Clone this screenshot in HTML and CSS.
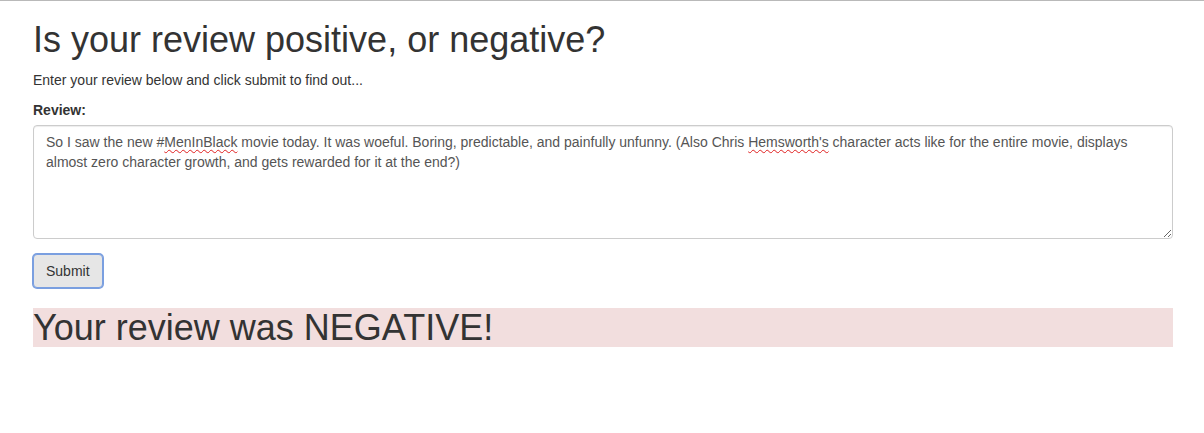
FILE: index.html
```html
<!DOCTYPE html>
<html lang="en">
<head>
<meta charset="utf-8">
<title>Review sentiment</title>
<link rel="stylesheet" href="styles.css">
</head>
<body>
<div class="topline"></div>
<div class="container">
  <h1 class="title">Is your review positive, or negative?</h1>
  <p class="lead-text">Enter your review below and click submit to find out...</p>
  <form class="review-form">
    <div class="form-group">
      <label class="field-label">Review:</label>
      <div class="form-control review-box" role="textbox" aria-multiline="true">So I saw the new #<span class="misspelled">MenInBlack</span> movie today. It was woeful. Boring, predictable, and painfully unfunny. (Also Chris <span class="misspelled">Hemsworth's</span> character acts like for the entire movie, displays almost zero character growth, and gets rewarded for it at the end?)</div>
    </div>
    <button type="button" class="btn btn-focused">Submit</button>
  </form>
  <h1 class="result result-negative">Your review was NEGATIVE!</h1>
</div>
</body>
</html>
```
FILE: styles.css
```css
html, body {
  margin: 0;
  padding: 0;
}
body {
  font-family: "Liberation Sans", Arial, Helvetica, sans-serif;
  font-size: 14px;
  line-height: 1.42857143;
  color: #333;
  background: #fff;
}
.topline {
  height: 1px;
  background: #b9b9b9;
}
.container {
  width: 1140px;
  margin: 0 auto;
  padding: 0 14px 0 16px;
}
.title, .result {
  font-size: 36px;
  font-weight: 500;
  line-height: 1.1;
  color: #333;
}
.title {
  margin: 19px 0 10px;
}
.lead-text {
  margin: 0 0 10px;
}
.form-group {
  margin-bottom: 15px;
}
.field-label {
  display: inline-block;
  margin-bottom: 5px;
  font-weight: bold;
}
.form-control {
  display: block;
  box-sizing: border-box;
  width: 100%;
  height: 114px;
  padding: 6px 12px;
  font-size: 14px;
  line-height: 1.42857143;
  color: #555;
  background: #fff;
  border: 1px solid #ccc;
  border-radius: 4px;
  box-shadow: inset 0 1px 1px rgba(0,0,0,.075);
  resize: vertical;
  overflow: auto;
}
.misspelled {
  text-decoration: underline wavy #e02020;
  text-decoration-thickness: 1px;
  text-underline-offset: 2px;
}
.btn {
  display: inline-block;
  box-sizing: border-box;
  height: 34px;
  padding: 6px 12px;
  font-family: inherit;
  font-size: 14px;
  line-height: 1.42857143;
  color: #333;
  background: #e6e6e6;
  border: 1px solid #8c8c8c;
  border-radius: 4px;
  cursor: pointer;
}
.btn-focused {
  border-color: #7a9fe0;
  box-shadow: 0 0 0 1px #7a9fe0;
}
.result {
  margin: 20px 0 10px;
}
.result-negative {
  background: #f2dede;
}
```
